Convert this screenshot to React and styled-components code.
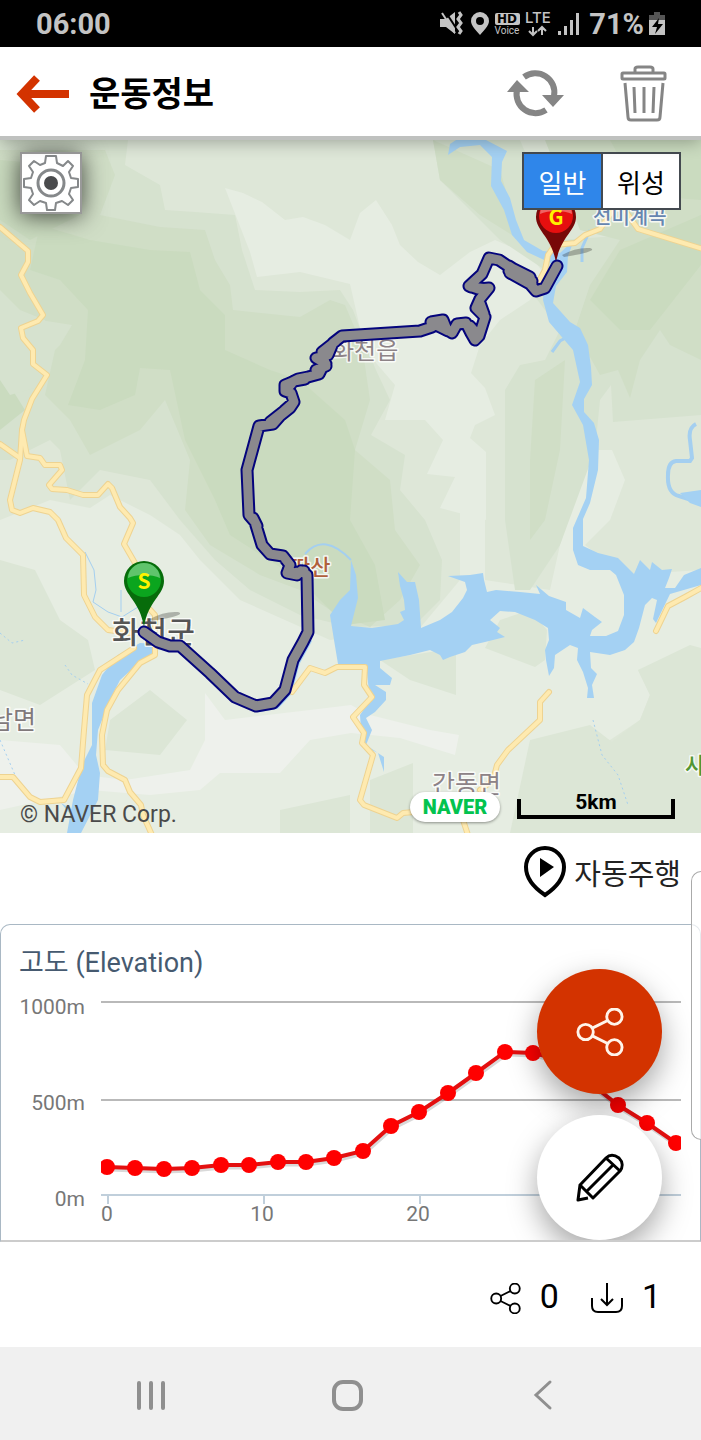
import React, { useState } from 'react'
import styled, { createGlobalStyle } from 'styled-components'

const App = () => {
    const [mapType, setMapType] = useState('normal');

  return (
    <>
        <GlobalStyle />
        <StatusBar>
            <Clock>06:00</Clock>
            <StatusIcons />
            <Battery>71%</Battery>
            <BatteryIcon />
        </StatusBar>

        <Header>
            <IconButton aria-label='뒤로'>
                <BackArrow />
            </IconButton>
            <Title>운동정보</Title>
            <HeaderMenu>
                <IconButton aria-label='새로고침'>
                    <RefreshIcon />
                </IconButton>
                <IconButton aria-label='삭제'>
                    <TrashIcon />
                </IconButton>
            </HeaderMenu>
        </Header>

        <MapArea>
            <MapDrawing />
            <GearButton aria-label='설정'>
                <GearIcon />
            </GearButton>
            <MapTypes>
                <TypeButton active={mapType === 'normal' ? 1 : 0} onClick={() => setMapType('normal')}>일반</TypeButton>
                <TypeButton active={mapType === 'satellite' ? 1 : 0} onClick={() => setMapType('satellite')}>위성</TypeButton>
            </MapTypes>
            <MapFooter>
                <Copyright>© NAVER Corp.</Copyright>
                <Naver href='#'>NAVER</Naver>
                <Scale>5km</Scale>
            </MapFooter>
        </MapArea>

        <Details>
            <PlayRow>
                <PlayButton>
                    <PlayPin />
                    자동주행
                </PlayButton>
            </PlayRow>
            <ChartCard>
                <ChartTitle>고도 (Elevation)</ChartTitle>
                <ElevationChart />
                <Floating>
                    <RoundButton color='#d33300' aria-label='공유'>
                        <ShareIcon size={48} stroke='#fff4ea' />
                    </RoundButton>
                    <RoundButton color='#fff' aria-label='수정'>
                        <PencilIcon />
                    </RoundButton>
                </Floating>
            </ChartCard>
            <EdgePanel />
        </Details>

        <Stats>
            <Stat>
                <ShareIcon size={31} stroke='#000' />
                0
            </Stat>
            <Stat>
                <DownloadIcon />
                1
            </Stat>
        </Stats>

        <NavBar>
            <NavButton aria-label='최근 앱'>
                <svg width='32' height='32' fill='none' stroke='#8f8f8f' strokeWidth='4' strokeLinecap='round'>
                    <path d='M4 4v25M16 4v25M28 4v25' />
                </svg>
            </NavButton>
            <NavButton aria-label='홈'>
                <svg width='32' height='32' fill='none' stroke='#8f8f8f' strokeWidth='4'>
                    <rect x='3' y='3' width='27' height='27' rx='9' />
                </svg>
            </NavButton>
            <NavButton aria-label='뒤로가기'>
                <svg width='32' height='32' fill='none' stroke='#8f8f8f' strokeWidth='3' strokeLinecap='round'>
                    <path d='M23 3L9 16l14 13' />
                </svg>
            </NavButton>
        </NavBar>
    </>
  )
}

export default App

const StatusIcons = () => (
    <svg width='142' height='30' viewBox='439 9 142 30' fill='#c4c4c4'>
        <path d='M440 19h6l9-7v22l-9-7h-6z' />
        <path d='M445 11l13 20' stroke='#000' strokeWidth='2' />
        <path d='M442 13l13 20' stroke='#c4c4c4' strokeWidth='2' />
        <path d='M459 12l2 3-3 4 3 4-3 4 3 4-2 3' fill='none' stroke='#c4c4c4' strokeWidth='3' />
        <path d='M480 12a9 9 0 0 0-9 9c0 5 5 9 9 14 4-5 9-9 9-14a9 9 0 0 0-9-9zm0 13a4 4 0 1 1 0-8 4 4 0 0 1 0 8z' fillRule='evenodd' />
        <rect x='495' y='13' width='25' height='12' rx='2' />
        <text x='507' y='23' fontSize='12' fontWeight='700' fontFamily='DejaVu Sans' textAnchor='middle' fill='#000'>HD</text>
        <text x='507' y='34' fontSize='10' textAnchor='middle'>Voice</text>
        <text x='525' y='23' fontSize='15' fontWeight='500' fontFamily='Inter'>LTE</text>
        <path d='M533 27v7M529 31l4 4 4-4M542 35v-7M538 31l4-4 4 4' fill='none' stroke='#c4c4c4' strokeWidth='2' />
        <path d='M558 31h3v4h-3zM564 26h3v9h-3zM570 20h3v15h-3zM576 13h3v22h-3z' />
    </svg>
)

const BatteryIcon = () => (
    <svg width='16' height='24' fill='#c4c4c4'>
        <path d='M5 0h6v3h5v5H0V3h5z' fill='#555' />
        <path d='M0 8h16v15H0z' />
        <path d='M10 6L3 15h5l-2 7 8-10H9z' fill='#000' />
    </svg>
)

const BackArrow = () => (
    <svg width='54' height='40' fill='none' stroke='#d33300'>
        <path d='M6 20h47' strokeWidth='8' />
        <path d='M21 4L6 20l15 16' strokeWidth='8' />
    </svg>
)

const RefreshIcon = () => (
    <svg width='58' height='58' viewBox='506 65 58 58' fill='none' stroke='#858585' strokeWidth='6'>
        <path d='M524 77a19 19 0 0 1 30 19M546 110a19 19 0 0 1-29-20' />
        <path d='M542 95h22L553 107zM507 92h22l-12-12z' fill='#858585' stroke='none' />
    </svg>
)

const TrashIcon = () => (
    <svg width='48' height='58' viewBox='620 64 48 58' fill='none' stroke='#858585' strokeWidth='3' strokeLinejoin='round'>
        <rect x='622' y='72' width='43' height='6' rx='1' />
        <path d='M635 72v-4q0-2 3-2h12q3 0 3 2v4' />
        <path d='M625 82l3 34q0 3 3 3h26q3 0 3-3l3-34M634 86l1 26M644 86v26M654 86l-1 26' />
    </svg>
)

const GearIcon = () => (
    <svg width='58' height='58' viewBox='-29 -29 58 58' fill='none' stroke='#85888a' strokeWidth='2'>
        <path d='M-5-27H5L6-20 12-17 17-22 22-17 18-11 20-5 27-4V4L20 5 18 11 22 17 17 22 11 18 5 20 4 27H-4L-5 20-11 18-17 22-22 17-18 11-20 5-27 4V-4L-20-5-18-11-22-17-17-22-11-18-6-20Z' strokeLinejoin='round' />
        <circle r='13' strokeWidth='3' />
        <circle r='7' fill='#4a4b4d' stroke='none' />
    </svg>
)

const PlayPin = () => (
    <svg width='44' height='54' fill='none' stroke='#000' strokeWidth='4'>
        <path d='M22 50C16 46 3 36 3 22a19 19 0 0 1 38 0c0 14-13 24-19 28z' />
        <path d='M17 13v19l14-10z' fill='#000' stroke='none' />
    </svg>
)

const ShareIcon = ({ size, stroke }) => (
    <svg width={size} height={size} viewBox='0 0 50 50' fill='none' stroke={stroke} strokeWidth='3'>
        <circle cx='10' cy='25' r='8' />
        <circle cx='40' cy='9' r='8' />
        <circle cx='40' cy='41' r='8' />
        <path d='M17 21l16-8M17 29l16 8' />
    </svg>
)

const PencilIcon = () => (
    <svg width='50' height='50' fill='none' stroke='#000' strokeWidth='3' strokeLinejoin='round'>
        <path d='M5 32L31 5c4-4 9-3 13 0 4 4 4 9 1 13L18 45zM5 32L3 47l10-2M5 32l13 13M31 5l14 13M12 38l26-26' />
    </svg>
)

const DownloadIcon = () => (
    <svg width='32' height='32' fill='none' stroke='#000' strokeWidth='2'>
        <path d='M16 1v22M10 17l6 6 6-6M1 16v8q0 6 6 6h18q6 0 6-6v-8' />
    </svg>
)

const elevations = [
    [107, 1167], [135, 1168], [164, 1169], [192, 1168], [221, 1165], [249, 1165], [278, 1162],
    [306, 1162], [334, 1158], [363, 1151], [391, 1126], [419, 1112], [448, 1093], [476, 1073],
    [505, 1052], [533, 1053], [562, 1060], [590, 1083], [618, 1105], [647, 1123], [676, 1143]
];

const points = elevations.map(p => p.join(',')).join(' ');

const ElevationChart = () => (
    <Chart viewBox='1 990 699 250' role='img' aria-label='고도'>
        <defs>
            <clipPath id='plot'>
                <rect x='101' y='990' width='580' height='210' />
            </clipPath>
        </defs>
        <path d='M101 1002h580M101 1100h580' stroke='#b9b9b9' strokeWidth='2' />
        <path d='M101 1195h580M108 1195v9M264 1195v9M420 1195v9M576 1195v9' stroke='#c0cfdb' strokeWidth='2' fill='none' />
        <g clipPath='url(#plot)'>
            <polyline points={points} transform='translate(1 2)' fill='none' stroke='#000' strokeOpacity='0.15' strokeWidth='5' />
            <polyline points={points} fill='none' stroke='#e31010' strokeWidth='4' />
            {elevations.map(([x, y]) => (
                <circle key={x} cx={x} cy={y} r='8' fill='#f00' />
            ))}
        </g>
        <g textAnchor='end'>
            <text x='85' y='1014'>1000m</text>
            <text x='85' y='1110'>500m</text>
            <text x='85' y='1206'>0m</text>
        </g>
        <g textAnchor='middle'>
            <text x='107' y='1221'>0</text>
            <text x='262' y='1221'>10</text>
            <text x='418' y='1221'>20</text>
        </g>
    </Chart>
)

const roads = [
    'M0 227L28 251V262L21 275 30 293 43 315 38 321 21 328 23 338 33 350V364L47 375 32 399 24 420 22 430 27 456 40 458 45 465 60 465 62 470 49 485 52 489 67 490 83 495 98 495 108 484 112 488 120 507 130 518 133 523 124 544 135 563 132 590 155 615V655L140 663 118 690 107 710 102 735 103 765 108 771 125 780 130 792 141 805 143 815 152 835',
    'M22 430L20 460 10 500 12 510 20 513 33 508 50 512 58 520 66 538 83 555 84 595 95 617 108 630 130 633',
    'M0 444L20 458',
    'M134 648L100 670 87 695 84 730 81 768 64 800 40 802 30 797 13 777 0 777',
    'M292 692L310 668 325 673 337 667H365L364 685 372 697 353 717 364 733 362 743 373 755 360 800 364 805 397 818 403 813 425 811',
    'M549 692L540 702V720L508 750 497 765 493 780 480 790M463 820L468 835',
    'M656 631L668 606 685 597 703 587',
    'M538 283L545 270 548 255 555 245 575 243 585 235 600 229 612 212M626 212L638 229 703 249'
];

const route = 'M144 632L158 642 170 646 180 646 210 673 235 697 256 706 273 703 285 690 293 660 303 642 308 632 307 575 301 571 297 575 287 573 290 565 283 556 270 554 262 545 255 522 249 515 247 470 259 426 273 424 280 416 290 408 294 402 291 393 285 391 285 385 290 383 298 379 308 377 319 374 322 368 326 364 316 358 328 355 333 343 342 336 420 331 432 327 431 322 443 320 447 330 452 333 457 324 466 323 471 333 475 340 479 336 485 317 476 308 480 299 489 288 478 289 469 286 482 274 489 258 499 260 508 266 530 277 532 284 510 273 530 284 536 291 545 288 557 266';
// the track doubles back on the mountain bends
const bends = 'M336 341L322 352 326 366 316 370M305 379L294 381 286 390M292 404L284 411 270 422M436 325L448 331M470 326L479 336M509 266L532 281M509 271L531 283M480 303L484 314M471 287L488 289M253 518L257 526M304 571L293 573';

const Pin = ({ x, y, letter, light, dark }) => (
    <g transform={`translate(${x} ${y})`}>
        <path d='M6 38Q20 30 34 31Q44 34 8 40Z' fill='#000' opacity='0.25' />
        <path d='M-20 0a20 20 0 0 1 40 0C20 14 4 20 0 46-4 20-20 14-20 0z' fill={dark} />
        <circle r='17' cy='-1' fill={light} />
        <path d='M-16-3a16 15 0 0 1 32 0C8-7-8-7-16-3z' fill='#fff' opacity='0.35' />
        <text y='8' fontFamily='DejaVu Sans' fontSize='21' fontWeight='700' fill='#fff200' textAnchor='middle'>{letter}</text>
    </g>
)

const MapDrawing = () => (
    <MapSvg viewBox='0 140 701 693' preserveAspectRatio='xMidYMid slice'>
        <rect y='140' width='701' height='693' fill='#dee7d8' />
        {/* low ground */}
        <g fill='#e6ede2'>
            <path d='M225 188L243 193 262 202 285 220 303 217 325 225 350 240 360 213 376 200 392 225 400 245 418 262 440 275 470 252 495 240 530 255 545 275 530 300 500 320 480 345 471 373 485 388 495 415 475 425 470 438 486 452V520L440 508 455 477 427 474 443 440 425 420 385 420 395 385 365 350 350 284 300 272 257 277 250 252Z' />
            <path d='M0 520L50 500 90 508 110 495 150 515 180 535 200 560 240 600 330 640 420 628 460 580V500H485V580L550 590 560 545 590 450 612 450 625 480 610 520 585 545 625 575 701 570V655L638 670 650 695 640 720 610 740 530 750 520 833H0Z' />
        </g>
        <g fill='#dce6d6'>
            <path d='M0 560L35 570 60 620 88 640 95 670 40 705 0 690ZM110 720L150 690 187 720 160 755 105 750ZM280 810L350 795V833H280ZM500 620L530 610 547 630 545 660 535 667 485 648ZM380 660L456 648V695L410 680ZM370 780L413 763V833H370Z' />
            <path d='M638 670L690 645 701 648V833H510L530 740 590 725 612 742 640 720 650 695Z' />
        </g>
        <path d='M205 693L225 720 310 710 351 705 370 715 430 730 459 735 455 755 400 738 351 733 310 740 280 773H220L200 790 150 795 90 790 0 810V740L60 745 85 775 125 780 190 770 205 740Z' fill='#eef1ec' />

        {/* hills, from the lowest shade up */}
        <path d='M0 140H128L125 165 160 185 165 210 195 212 235 215 242 250 255 290 300 292 340 290 353 310 375 368 390 400 371 435 405 455 400 490 425 520 442 560 440 600 415 625 350 627 300 615 250 590 215 560 180 520 150 480 100 470 70 500 60 450 50 440 10 460 0 460ZM433 140H520L545 200 560 240 701 230V415L613 422 611 385 600 400 595 450 560 545 530 590H515L505 520V390L520 365 545 360 560 330 530 290 545 270 500 240 470 210 440 180Z' fill='#d6e2cf' />
        <path d='M0 150H105L115 175 100 215 160 227 205 230 215 260 230 285 233 310 300 317 330 300 345 305 362 345 370 400 355 450 390 480 395 530 420 565 400 600 370 627 330 610 300 590 260 575 210 545 185 510 190 460 165 400 140 430 90 455 70 420 45 395 55 350 45 320 20 310 0 290ZM545 140H701V360L670 345 660 330 640 360 630 398 618 370 600 375 575 330 590 285 620 240 580 230ZM535 380L565 360 560 450 545 520 530 540V460ZM433 140L500 170 520 240 480 215 440 180Z' fill='#d0dec6' />
        <path d='M40 225L90 240 150 250 190 252 200 290 225 315 225 350 270 370 300 380 345 420 355 450 350 520 375 565 385 620 345 625 300 580 230 535 215 500 185 440 170 370 140 368 135 395 100 410 68 405 85 360 88 310 60 280 30 270ZM0 160L60 165 80 215 30 240 0 220ZM620 250L701 215V265L650 330 620 330 590 300ZM610 140H701V200L640 195ZM0 370L25 410 0 430Z' fill='#cadbbf' />
        <path d='M0 310L40 320 72 325 60 345 45 360V385L10 395 0 380Z' fill='#d6e2cf' />

        {/* streams */}
        <g fill='none' stroke='#a4cff0' strokeWidth='2'>
            <path d='M305 554Q324 532 351 560' />
            <path d='M85 552L94 570 96 590 93 602 108 612 122 617 138 607M121 590V612' strokeWidth='1' />
            <path d='M696 424Q688 428 690 440L692 458 690 461H676Q668 462 668 475 667 493 679 496L701 503' strokeWidth='4' />
            <path d='M0 633L12 643 25 640M65 665L72 675 88 684M0 740L15 775M593 720L602 755 618 775 628 805' strokeDasharray='2 3' strokeWidth='1' />
            <path d='M573 334L560 341 552 352M582 262V248L590 230' strokeWidth='3' />
        </g>
        {/* rivers and the lake */}
        <g fill='#a4d1f3'>
            <path d='M448 155L450 144 456 140H486L507 151 502 162 501 181 510 198 516 220 524 240 543 251 560 253 574 240 568 256 567 272 556 286 553 303 570 322 580 328 588 345 591 367 592 385 584 399 584 412 594 423 599 440 598 470 590 503 583 519V546L598 553 618 558 634 574 640 560 650 570 652 562 662 570 672 569 669 578 665 588 675 588 684 575 701 568V585L670 594 656 623 653 619 657 600 652 598 645 605 639 628 634 642 625 650 610 655 590 652 591 668 597 674 592 685 594 698 587 698 588 688 583 672 577 660 578 648 570 645 555 655 554 668 549 676 546 660 545 650 549 640 548 628 535 620 515 612 500 611 490 620 500 628 497 632 505 637 485 642 472 645 465 652 450 657 443 660 440 655 430 650 410 655 380 661V668L392 678 390 685H375L386 692V700L375 712 366 718 372 730 366 745 384 757V772L378 753 362 745 360 715 370 700 366 664H338L334 640 330 615 340 600 350 590 351 560 356 575 358 598 351 626 372 628 398 624 404 620 400 612 405 610 404 600 400 586 398 572 407 582H415L419 600 421 628 440 620 452 612 463 598 467 590 465 582 448 576 470 575 483 573 484 580 487 592 496 590 520 592 540 594 536 585 549 596 566 602V610L580 618 583 608 595 617 602 622 592 630 590 636 606 636 618 631 624 615V595L616 575 610 570 590 570 578 565 573 550V528L586 498 589 460 583 425 572 405 580 382 573 350 549 322 543 300 545 278 555 265 527 252 512 235 504 210 491 186 492 157 480 145 460 147Z' />
            <path d='M176 645L140 643 118 655 102 675 92 703V745L82 765 73 800 67 833H81L98 800 100 773 96 755 98 730 110 700 120 680 142 660 158 650Z' />
            <path d='M680 493L701 490V507L690 503ZM61 803L75 820V811Z' />
        </g>
        <path d={route} transform='translate(3 2)' fill='none' stroke='#a4d1f3' strokeWidth='8' strokeDasharray='230 3000' />

        <g fill='none' strokeLinecap='round' strokeLinejoin='round'>
            {roads.map((d, index) => <path key={index} d={d} stroke='#eed391' strokeWidth='6' />)}
            {roads.map((d, index) => <path key={index} d={d} stroke='#feeab0' strokeWidth='4' />)}
        </g>

        <g stroke='#fff' strokeWidth='3' strokeOpacity='0.8' paintOrder='stroke' strokeLinejoin='round'>
            <text x='112' y='643' fontSize='30' fontWeight='500' fill='#555'>화천군</text>
            <text x='-10' y='729' fontSize='25' fill='#81797b'>남면</text>
            <text x='332' y='359' fontSize='24' fill='#8d8387'>화천읍</text>
            <text x='593' y='224' fontSize='20' fontWeight='500' fill='#6686b0'>선미계곡</text>
            <text x='290' y='575' fontSize='22' fontWeight='500' fill='#b0603c'>딴산</text>
            <text x='432' y='793' fontSize='25' fill='#8d8387'>간동면</text>
            <text x='685' y='773' fontSize='22' fontWeight='500' fill='#529634'>사</text>
        </g>

        <Pin x={556} y={217} letter='G' light='#e60f0f' dark='#780808' />
        <Pin x={144} y={581} letter='S' light='#0ba51e' dark='#076c0b' />
        <g fill='none' strokeLinecap='round' strokeLinejoin='round'>
            <path d={route + bends} stroke='#04047c' strokeWidth='13' />
            <path d={route + bends} stroke='#8a898d' strokeWidth='9' />
        </g>
    </MapSvg>
)

const GlobalStyle = createGlobalStyle`
    * {
        box-sizing: border-box;
    }

    body {
        margin: 0;
        background: #fff;
        font-family: Roboto, "Noto Sans CJK KR", sans-serif;
        color: #000;
    }

    button {
        border: 0;
        padding: 0;
        background: none;
        font-family: inherit;
        color: inherit;
        cursor: pointer;
    }

    svg {
        display: block;
        flex-shrink: 0;
    }
`

const StatusBar = styled.div`
    height: 47px;
    padding: 0 36px;
    background: #000;
    color: #c4c4c4;
    display: flex;
    align-items: center;
`

const Clock = styled.span`
    flex: 1;
    font-size: 29px;
    font-weight: 700;
`

const Battery = styled.span`
    margin: 0 5px 0 8px;
    font-size: 29px;
    font-weight: 700;
`

const Header = styled.header`
    position: relative;
    z-index: 1;
    height: 93px;
    padding: 4px 33px 0 16px;
    display: flex;
    align-items: center;
    background: #fff;
    border-bottom: 4px solid #bfc1bf;
    box-shadow: 0 2px 16px rgba(0, 0, 0, 0.3);
`

const IconButton = styled.button`
    display: flex;
    align-items: center;
`

const Title = styled.h1`
    flex: 1;
    margin: 0 0 0 19px;
    font-size: 34px;
    line-height: 40px;
    font-weight: 700;
`

const HeaderMenu = styled.div`
    display: flex;
    align-items: center;
    gap: 56px;
`

const MapArea = styled.main`
    position: relative;
    aspect-ratio: 701 / 693;
    overflow: hidden;
`

const MapSvg = styled.svg`
    width: 100%;
    height: 100%;

    text {
        font-family: "Noto Sans CJK KR", sans-serif;
    }
`

const GearButton = styled.button`
    position: absolute;
    top: 12px;
    left: 20px;
    width: 62px;
    height: 62px;
    display: flex;
    align-items: center;
    justify-content: center;
    background: #fff;
    border: 2px solid #999;
    box-shadow: 0 2px 24px rgba(0, 0, 0, 0.7);
`

const MapTypes = styled.div`
    position: absolute;
    top: 12px;
    right: 20px;
    display: flex;
    border: 2px solid #444a50;
    background: #fff;
`

const TypeButton = styled.button`
    width: 77px;
    height: 54px;
    font-size: 26px;
    background: ${props => props.active ? '#2f86ea' : '#fff'};
    color: ${props => props.active ? '#fff' : '#000'};

    & + & {
        width: 78px;
        border-left: 2px solid #444a50;
    }
`

const MapFooter = styled.div`
    position: absolute;
    left: 20px;
    right: 26px;
    bottom: 4px;
    height: 40px;
    display: flex;
    align-items: center;
`

const Copyright = styled.span`
    flex: 1;
    padding-top: 10px;
    font-size: 23px;
    color: #4a4a4a;
`

const Naver = styled.a`
    height: 30px;
    width: 90px;
    margin-bottom: 4px;
    border-radius: 15px;
    background: #fff;
    box-shadow: 0 1px 3px rgba(0, 0, 0, 0.4);
    text-align: center;
    font-size: 20px;
    line-height: 30px;
    font-weight: 900;
    text-decoration: none;
    color: #03c34f;
`

const Scale = styled.div`
    position: relative;
    width: 158px;
    height: 28px;
    margin: 0 0 8px 17px;
    text-align: center;
    font-size: 21px;
    line-height: 22px;
    font-weight: 700;

    &::after {
        content: '';
        position: absolute;
        left: 0;
        right: 0;
        bottom: 0;
        height: 16px;
        border: 4px solid #000;
        border-top: 0;
    }
`

const Details = styled.section`
    position: relative;
`

const PlayRow = styled.div`
    height: 91px;
    padding: 12px 20px 0 0;
    display: flex;
    align-items: flex-start;
    justify-content: flex-end;
`

const PlayButton = styled.button`
    display: flex;
    align-items: center;
    gap: 7px;
    font-size: 29px;
    color: #222;
`

const ChartCard = styled.div`
    position: relative;
    border: 1px solid #a9b8c4;
    border-bottom: 2px solid #ccc;
    border-radius: 10px 10px 0 0;
    overflow: hidden;
`

const ChartTitle = styled.h2`
    margin: 0;
    padding: 19px 18px 7px;
    font-size: 27px;
    line-height: 39px;
    font-weight: 400;
    color: #465a70;
`

const Chart = styled.svg`
    width: 100%;

    text {
        font-size: 21px;
        fill: #777;
    }
`

const Floating = styled.div`
    position: absolute;
    right: 38px;
    bottom: 0;
    display: flex;
    flex-direction: column;
    gap: 21px;
`

const RoundButton = styled.button`
    width: 125px;
    height: 125px;
    border-radius: 50%;
    display: flex;
    align-items: center;
    justify-content: center;
    background: ${props => props.color};
    box-shadow: 0 12px 30px rgba(0, 0, 0, 0.35);
`

const EdgePanel = styled.div`
    position: absolute;
    top: 38px;
    right: 0;
    width: 10px;
    height: 269px;
    border: 1px solid #aaa;
    border-right: 0;
    border-radius: 10px 0 0 10px;
    background: rgba(255, 255, 255, 0.7);
`

const Stats = styled.div`
    height: 105px;
    padding: 3px 40px 0 0;
    display: flex;
    align-items: center;
    justify-content: flex-end;
    gap: 32px;
`

const Stat = styled.span`
    display: flex;
    align-items: center;
    gap: 19px;
    font-size: 34px;
    line-height: 36px;

    svg {
        margin-top: 4px;
    }
`

const NavBar = styled.nav`
    height: 94px;
    padding: 2px 60px 0 53px;
    display: flex;
    align-items: center;
    background: #f0f0f0;
`

const NavButton = styled.button`
    flex: 1;
    display: flex;
    justify-content: center;
`
